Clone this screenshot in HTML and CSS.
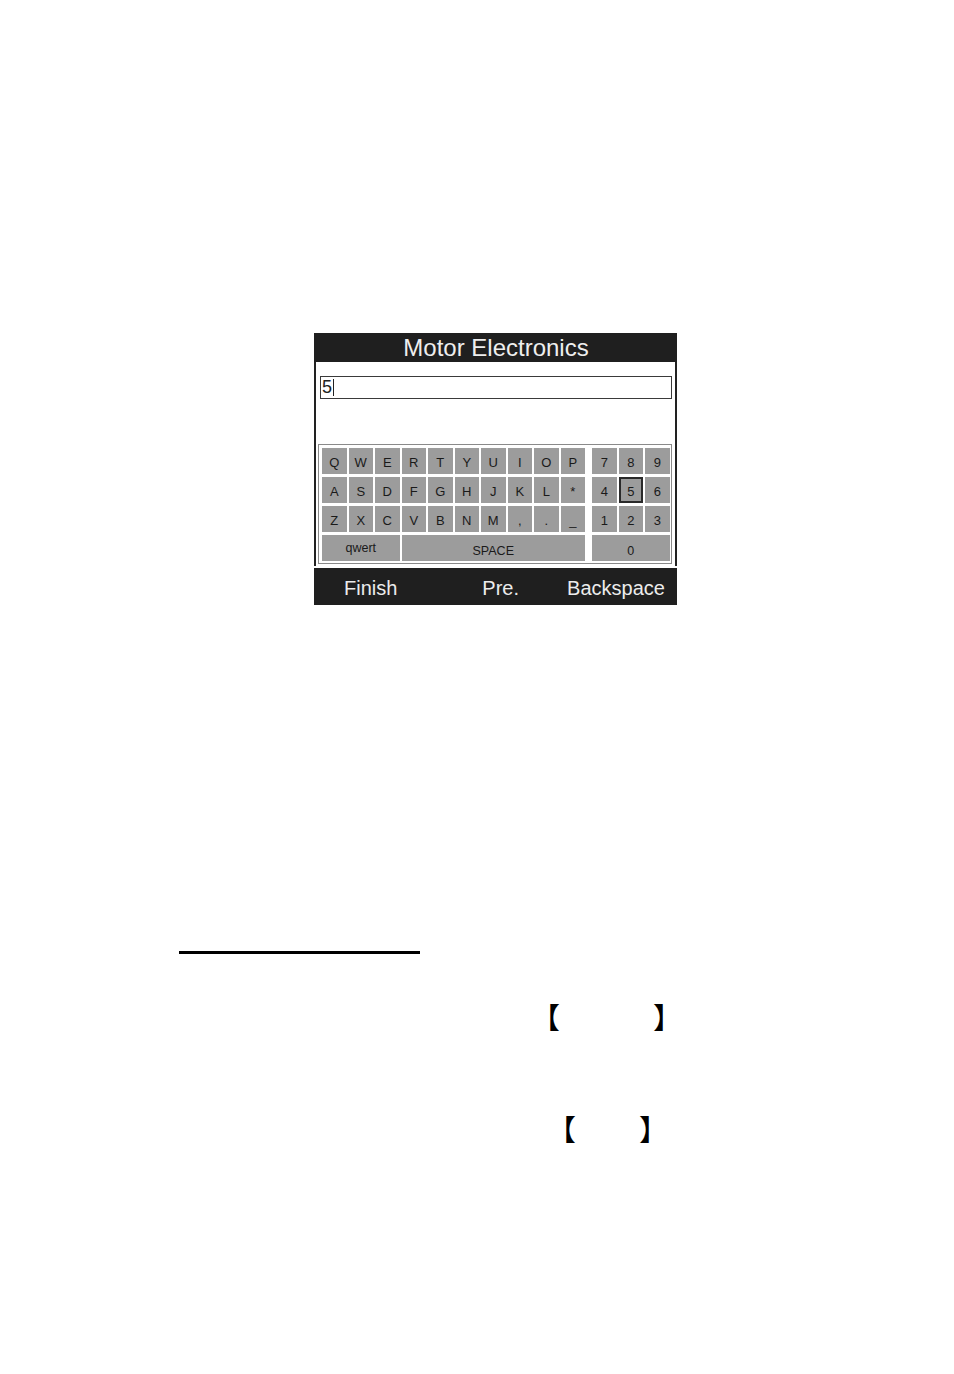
FILE: index.html
```html
<!DOCTYPE html>
<html>
<head>
<meta charset="utf-8">
<link rel="stylesheet" href="styles.css">
</head>
<body>
<div class="page">
  <div class="screen">
    <div class="header">Motor Electronics</div>
    <div class="body">
      <div class="input"><span class="val">5</span><span class="caret"></span></div>
      <div class="kbd">
        <div class="letters">
          <div class="key">Q</div><div class="key">W</div><div class="key">E</div><div class="key">R</div><div class="key">T</div><div class="key">Y</div><div class="key">U</div><div class="key">I</div><div class="key">O</div><div class="key">P</div>
          <div class="key">A</div><div class="key">S</div><div class="key">D</div><div class="key">F</div><div class="key">G</div><div class="key">H</div><div class="key">J</div><div class="key">K</div><div class="key">L</div><div class="key">*</div>
          <div class="key">Z</div><div class="key">X</div><div class="key">C</div><div class="key">V</div><div class="key">B</div><div class="key">N</div><div class="key">M</div><div class="key">,</div><div class="key">.</div><div class="key">_</div>
          <div class="key wide3 small">qwert</div><div class="key wide7 small space">SPACE</div>
        </div>
        <div class="numbers">
          <div class="key">7</div><div class="key">8</div><div class="key">9</div>
          <div class="key">4</div><div class="key sel">5</div><div class="key">6</div>
          <div class="key">1</div><div class="key">2</div><div class="key">3</div>
          <div class="key wide3 small space">0</div>
        </div>
      </div>
    </div>
    <div class="footer">
      <span class="f-finish">Finish</span>
      <span class="f-pre">Pre.</span>
      <span class="f-back">Backspace</span>
    </div>
  </div>

  <div class="rule"></div>

  <p class="bline b1"><span class="open">【</span><span class="close c1">】</span></p>
  <p class="bline b2"><span class="open">【</span><span class="close c2">】</span></p>
</div>
</body>
</html>
```

FILE: styles.css
```css
html, body {
  margin: 0;
  padding: 0;
  background: #fff;
}
.page {
  width: 954px;
  height: 1374px;
  overflow: hidden;
  padding-top: 333px;
  box-sizing: border-box;
  font-family: "Liberation Sans", Arial, sans-serif;
}
.screen {
  width: 363px;
  margin-left: 314px;
  background: #fff;
}
.header {
  height: 29px;
  background: #1f1f1f;
  color: #eeeeee;
  font-size: 24px;
  line-height: 29px;
  text-align: center;
  padding-left: 1px;
}
.body {
  border-left: 2px solid #222;
  border-right: 2px solid #222;
  padding: 14px 3px 2px 2px;
}
.input {
  height: 21px;
  margin-left: 2px;
  border: 1.5px solid #3a3a3a;
  display: flex;
  align-items: center;
  padding-left: 1px;
  font-size: 18px;
  color: #222;
}
.caret {
  display: inline-block;
  width: 1px;
  height: 17px;
  background: #222;
  margin-left: 1px;
}
.kbd {
  margin-top: 45px;
  border: 1px solid #8a8a8a;
  padding: 3px 2px 2px 3px;
  display: flex;
  gap: 7px;
}
.letters, .numbers {
  display: grid;
  grid-auto-rows: 26px;
  row-gap: 3px;
  column-gap: 2px;
}
.letters {
  grid-template-columns: repeat(10, 24.5px);
}
.numbers {
  grid-template-columns: repeat(3, 24.5px);
}
.key {
  background: #9c9c9c;
  color: #1a1a1a;
  font-size: 13px;
  display: flex;
  align-items: center;
  justify-content: center;
  box-sizing: border-box;
  padding-top: 3px;
}
.key.small {
  font-size: 12.5px;
  align-items: flex-start;
  padding-top: 6px;
}
.key.space {
  padding-top: 9px;
}
.wide3 { grid-column: span 3; }
.wide7 { grid-column: span 7; }
.key.sel {
  border: 2px solid #2a2a2a;
}
.footer {
  margin-top: 2px;
  height: 37px;
  background: #1f1f1f;
  color: #ececec;
  font-size: 20px;
  line-height: 40px;
  display: flex;
  padding-left: 30px;
}
.f-pre { margin-left: 85px; }
.f-back { margin-left: 48px; }
.rule {
  width: 241px;
  height: 3px;
  background: #000;
  margin-left: 179px;
  margin-top: 346px;
}
.bline {
  margin: 0;
  font-family: "Noto Sans CJK SC", "Noto Sans CJK JP", sans-serif;
  font-size: 29px;
  line-height: 30px;
  color: #000;
  display: flex;
}
.b1 {
  margin-top: 47px;
  padding-left: 531px;
}
.b2 {
  margin-top: 82px;
  padding-left: 547px;
}
.c1 { margin-left: 93px; }
.c2 { margin-left: 63px; }
```
